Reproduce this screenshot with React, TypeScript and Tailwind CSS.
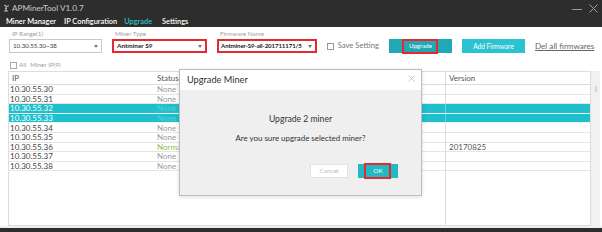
import React from "react";

const rows = [
  { ip: "10.30.55.30", status: "None", version: "", sel: false },
  { ip: "10.30.55.31", status: "None", version: "", sel: false },
  { ip: "10.30.55.32", status: "None", version: "", sel: true },
  { ip: "10.30.55.33", status: "None", version: "", sel: true },
  { ip: "10.30.55.34", status: "None", version: "", sel: false },
  { ip: "10.30.55.35", status: "None", version: "", sel: false },
  { ip: "10.30.55.36", status: "Normal", version: "20170825", sel: false },
  { ip: "10.30.55.37", status: "None", version: "", sel: false },
  { ip: "10.30.55.38", status: "None", version: "", sel: false },
];

function Caret() {
  return (
    <svg width="4" height="3" viewBox="0 0 4 3" className="shrink-0">
      <path d="M0 0 L4 0 L2 3 Z" fill="#777" />
    </svg>
  );
}

export default function App() {
  return (
    <div className="relative w-[602px] h-[232px] overflow-hidden bg-white flex flex-col whitespace-nowrap font-['Lato','Open_Sans',sans-serif]">
      {/* Title bar */}
      <div className="h-[27px] shrink-0 bg-[#2d2d2d] flex flex-col">
        <div className="h-[16px] flex items-center pl-[3px]">
          <svg width="7" height="8" viewBox="0 0 7 8" className="shrink-0">
            <path d="M1 1 L4 2.5 L6 1.5 M3 2 L3 7 M1 7 L5 7 M2 4 L4 5" stroke="#d0d0d0" strokeWidth="0.9" fill="none" />
          </svg>
          <span className="ml-[2px] text-[8.2px] leading-none text-[#c9c9c9]">APMinerTool V1.0.7</span>
          <div className="ml-auto flex items-center pr-[4px] gap-[7px]">
            <div className="w-[10px] h-[1px] bg-[#9a9a9a] mt-[3px]" />
            <svg width="9" height="9" viewBox="0 0 9 9">
              <path d="M0.5 0.5 L8.5 8.5 M8.5 0.5 L0.5 8.5" stroke="#a0a0a0" strokeWidth="1" />
            </svg>
          </div>
        </div>
        <div className="h-[11px] flex items-center pl-[6px] text-[7.4px] leading-none text-white font-semibold">
          <span>Miner Manager</span>
          <span className="ml-[8px]">IP Configuration</span>
          <span className="ml-[7px] text-[#2fc4d0]">Upgrade</span>
          <span className="ml-[10px]">Settings</span>
        </div>
      </div>

      {/* Toolbar */}
      <div className="h-[26px] shrink-0 flex items-end pl-[9px]">
        <div className="w-[93px] shrink-0 flex flex-col">
          <div className="h-[8px] pl-[3px] text-[6.3px] leading-[8px] text-[#a0a0a0]">IP Range(1)</div>
          <div className="mt-[1px] h-[14px] border border-[#c8c8c8] flex items-center pl-[3px] pr-[3px]">
            <span className="text-[6.2px] leading-none text-[#444]">10.30.55.30~38</span>
            <span className="ml-auto"><Caret /></span>
          </div>
        </div>
        <div className="ml-[10px] w-[95px] shrink-0 flex flex-col">
          <div className="h-[8px] pl-[3px] text-[6.3px] leading-[8px] text-[#a0a0a0]">Miner Type</div>
          <div className="mt-[1px] h-[14px] border-2 border-[#e32b2f] flex items-center pl-[3px] pr-[3px]">
            <span className="text-[6.4px] leading-none text-[#222] font-bold">Antminer S9</span>
            <span className="ml-auto"><Caret /></span>
          </div>
        </div>
        <div className="ml-[10px] w-[100px] shrink-0 flex flex-col">
          <div className="h-[8px] pl-[3px] text-[6.3px] leading-[8px] text-[#a0a0a0]">Firmware Name</div>
          <div className="mt-[1px] h-[14px] border-2 border-[#e32b2f] flex items-center pl-[2px] pr-[3px]">
            <span className="text-[6.1px] leading-none text-[#222] font-bold tracking-[-0.1px] overflow-hidden">Antminer-S9-all-201711171/5</span>
            <span className="ml-auto pl-[2px]"><Caret /></span>
          </div>
        </div>
        <div className="ml-[10px] w-[52px] h-[14px] shrink-0 flex items-center">
          <div className="w-[7px] h-[7px] border border-[#999] bg-white" />
          <span className="ml-[4px] text-[7.7px] leading-none text-[#777]">Save Setting</span>
        </div>
        <div className="ml-[10px] relative w-[63px] h-[14px] shrink-0 bg-[#21a8b4] flex items-center justify-center">
          <span className="text-[6.2px] leading-none text-white">Upgrade</span>
          <div className="absolute left-[13px] right-[14px] top-0 -bottom-[1px] border-2 border-[#e32b2f]" />
        </div>
        <div className="ml-[10px] w-[63px] h-[14px] shrink-0 bg-[#2bc3cf] flex items-center justify-center">
          <span className="text-[6.6px] leading-none text-white">Add Firmware</span>
        </div>
        <div className="ml-[10px] h-[14px] shrink-0 flex items-center">
          <span className="text-[8.1px] leading-none text-[#666] underline underline-offset-[1px]">Del all firmwares</span>
        </div>
      </div>

      {/* All miner row */}
      <div className="mt-[7px] h-[10px] shrink-0 flex items-center pl-[10px]">
        <div className="w-[7px] h-[7px] border border-[#aaa] bg-white" />
        <span className="ml-[2px] text-[6.3px] leading-none text-[#a0a0a0]">All</span>
        <span className="ml-[4px] text-[6.3px] leading-none text-[#a0a0a0]">Miner IP(9)</span>
      </div>

      {/* Table */}
      <div className="mt-[1px] h-[155px] shrink-0 flex pl-[8px]">
        <div className="w-[583px] border border-[#dcdcdc] flex flex-col">
          <div className="h-[13px] shrink-0 flex items-center border-b border-[#dcdcdc] text-[8px] leading-none text-[#555]">
            <div className="w-[146px] pl-[3px]">IP</div>
            <div className="w-[145px] pl-[2px]">Status</div>
            <div className="w-[145px]" />
            <div className="flex-1 self-stretch flex items-center border-l border-[#dcdcdc] pl-[3px]">Version</div>
          </div>
          {rows.map((r) => (
            <div
              key={r.ip}
              className={
                r.sel
                  ? "h-[9.6px] shrink-0 flex items-center border-b border-[#e8f7f8] bg-[#1fbfcb] text-[8px] leading-none"
                  : "h-[9.6px] shrink-0 flex items-center border-b border-[#e4e4e4] text-[8px] leading-none"
              }
            >
              <div className={r.sel ? "w-[146px] pl-[1px] text-white" : "w-[146px] pl-[1px] text-[#444]"}>{r.ip}</div>
              <div
                className={
                  r.sel
                    ? "w-[145px] pl-[2px] text-[#55ccd5]"
                    : r.status === "Normal"
                    ? "w-[145px] pl-[2px] text-[#86c24a]"
                    : "w-[145px] pl-[2px] text-[#9a9a9a]"
                }
              >
                {r.status}
              </div>
              <div className="w-[145px]" />
              <div className={r.sel ? "flex-1 self-stretch flex items-center border-l border-[#6fd3da] pl-[3px] text-white" : "flex-1 self-stretch flex items-center border-l border-[#dcdcdc] pl-[3px] text-[#555]"}>
                {r.version}
              </div>
            </div>
          ))}
          <div className="flex-1 flex">
            <div className="w-[436px]" />
            <div className="flex-1 border-l border-[#dcdcdc]" />
          </div>
        </div>
        <div className="w-[9px] bg-[#f1f1f1] flex flex-col items-center">
          <div className="mt-[15px] w-[2px] h-[6px] bg-[#d4d4d4]" />
        </div>
      </div>

      <div className="h-[2px] shrink-0 bg-[#efefef]" />
      <div className="h-[4px] shrink-0 bg-[#2d2d2d]" />

      {/* Modal */}
      <div className="absolute left-[179px] top-[69px] w-[243px] h-[127px] border border-[#bdbdbd] shadow-[0_1px_4px_rgba(0,0,0,0.15)] flex flex-col bg-[#efefef]">
        <div className="h-[20px] shrink-0 bg-white flex items-center pl-[7px] pr-[6px]">
          <span className="text-[9.2px] leading-none text-[#333]">Upgrade Miner</span>
          <svg width="7" height="7" viewBox="0 0 7 7" className="ml-auto -mt-[4px]">
            <path d="M0.5 0.5 L6.5 6.5 M6.5 0.5 L0.5 6.5" stroke="#c4c4c4" strokeWidth="0.9" />
          </svg>
        </div>
        <div className="flex-1 flex flex-col">
          <div className="mt-[24px] h-[10px] flex items-center justify-center text-[8.6px] leading-none text-[#333]">Upgrade 2 miner</div>
          <div className="mt-[10px] h-[10px] flex items-center justify-center text-[7.9px] leading-none text-[#333]">Are you sure upgrade selected miner?</div>
          <div className="mt-[20px] h-[14px] flex justify-end pr-[23px] gap-[10px]">
            <div className="w-[38px] h-[14px] bg-white border border-[#e2e2e2] flex items-center justify-center">
              <span className="text-[6.5px] leading-none text-[#bbb]">Cancel</span>
            </div>
            <div className="relative w-[40px] h-[14px] bg-[#22b8c4] flex items-center justify-center">
              <span className="text-[6.5px] leading-none text-white">OK</span>
              <div className="absolute left-[6px] right-[7px] -top-[1.5px] -bottom-[1px] border-2 border-[#e32b2f]" />
            </div>
          </div>
        </div>
      </div>
    </div>
  );
}
